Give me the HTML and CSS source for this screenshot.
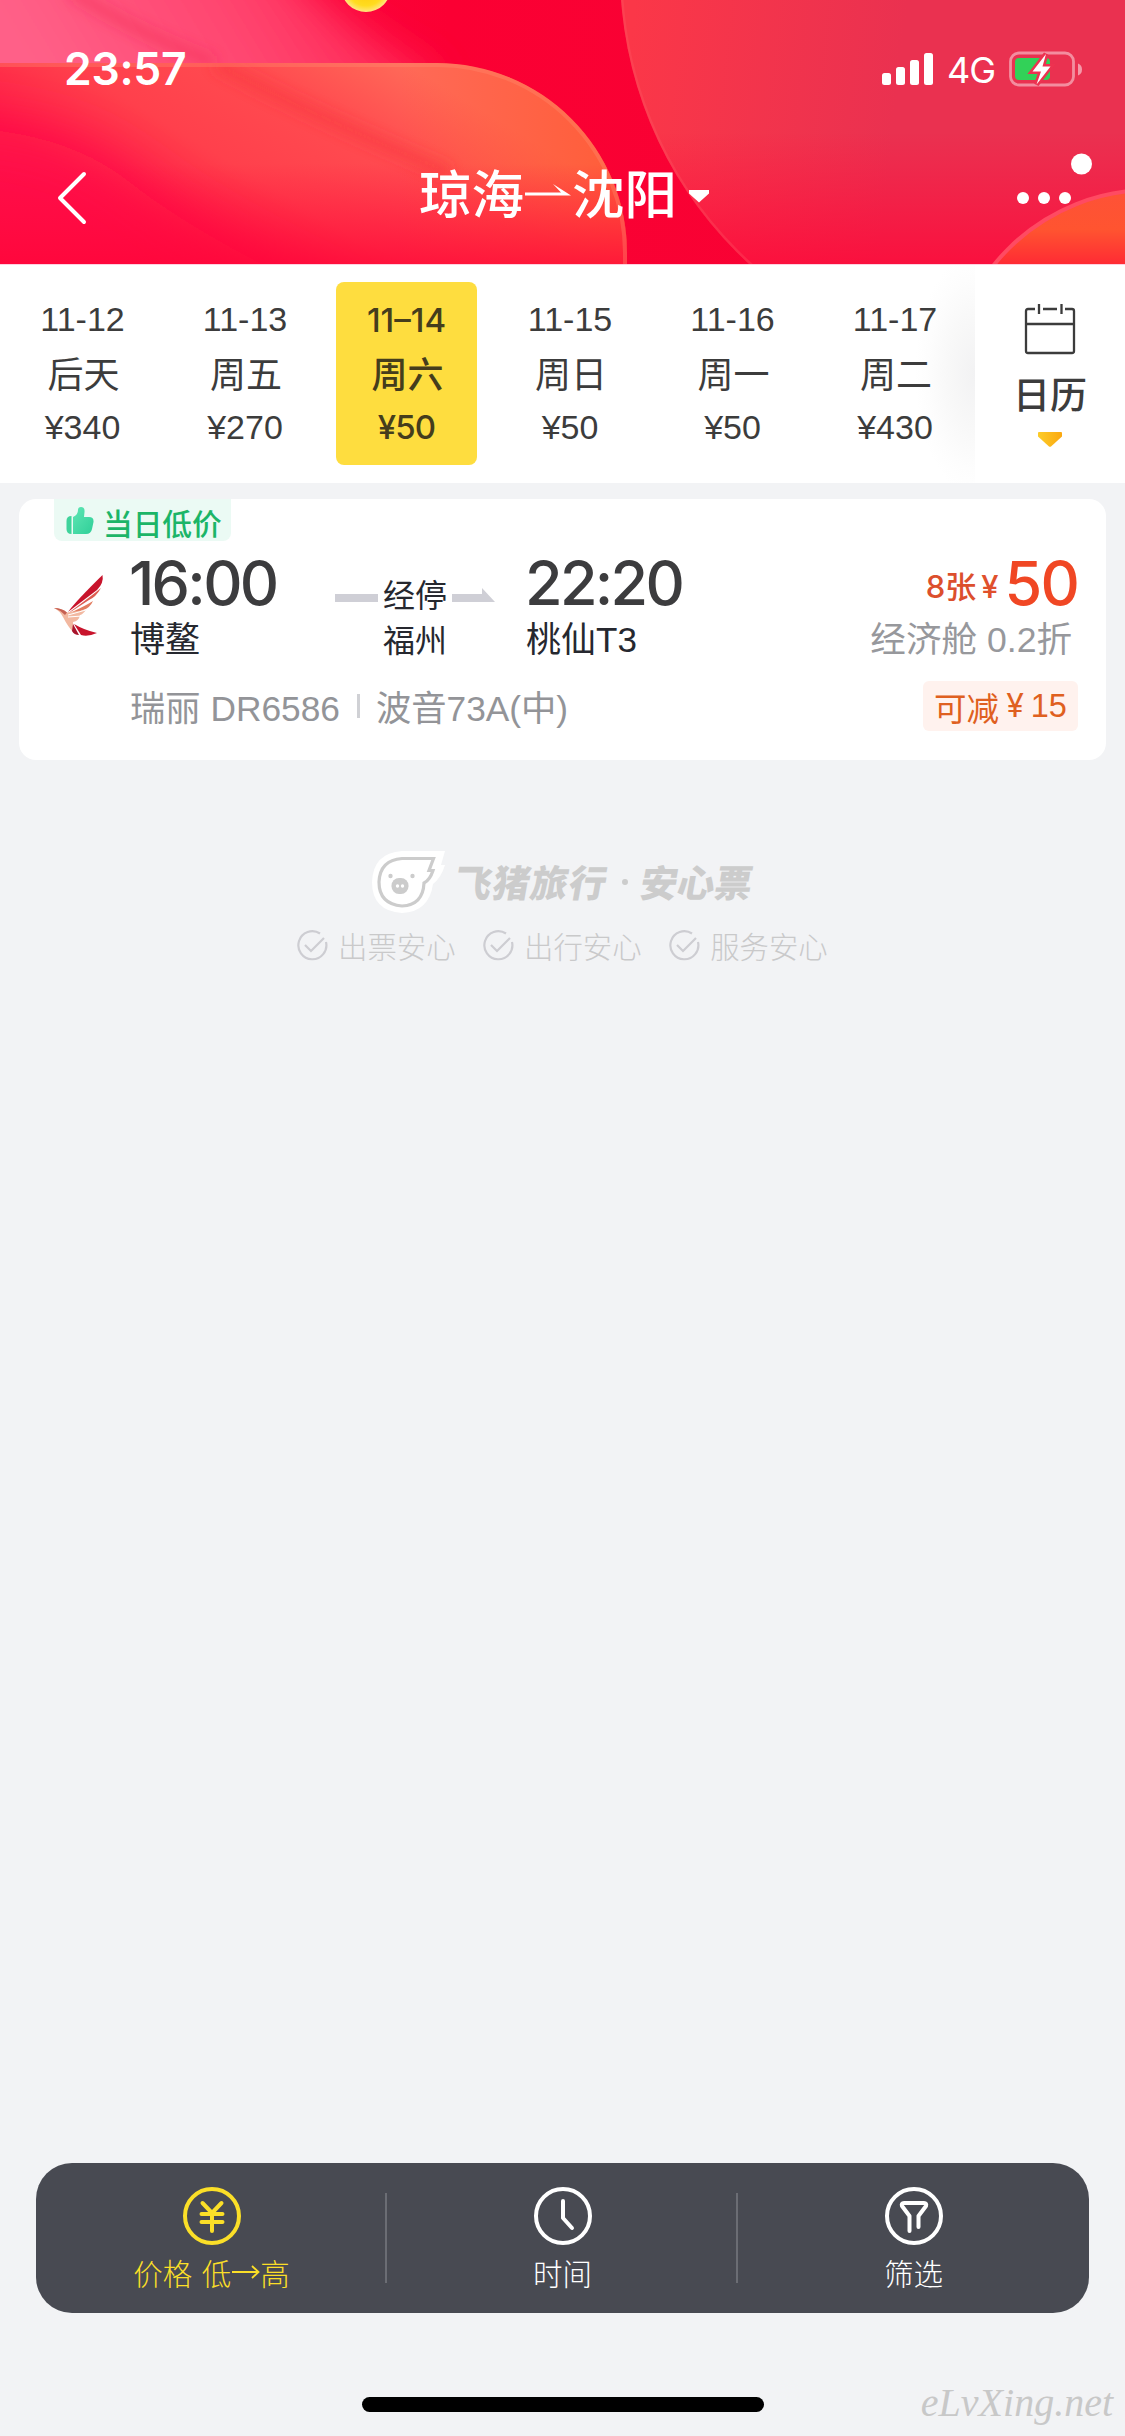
FILE: index.html
```html
<!DOCTYPE html>
<html lang="zh-CN">
<head>
<meta charset="utf-8">
<title>琼海→沈阳</title>
<link rel="stylesheet" href="styles.css">
</head>
<body>
<header class="header">
  <svg class="header-art" viewBox="0 0 1125 264" preserveAspectRatio="none" aria-hidden="true">
    <defs>
      <linearGradient id="base" x1="0" y1="0" x2="1" y2="0"><stop offset="0" stop-color="#ff0a4a"/><stop offset=".4" stop-color="#fb0033"/><stop offset="1" stop-color="#f50434"/></linearGradient>
      <linearGradient id="pink" gradientUnits="userSpaceOnUse" x1="60" y1="90" x2="360" y2="-90"><stop offset="0" stop-color="#ff6088"/><stop offset=".55" stop-color="#ff446e"/><stop offset="1" stop-color="#ff1c4c"/></linearGradient>
      <linearGradient id="slab" gradientUnits="userSpaceOnUse" x1="260" y1="290" x2="400" y2="60"><stop offset="0" stop-color="#ff1a46"/><stop offset=".35" stop-color="#ff404c"/><stop offset=".7" stop-color="#ff4c50"/><stop offset="1" stop-color="#ff6a58"/></linearGradient>
      <linearGradient id="slabr" gradientUnits="userSpaceOnUse" x1="400" y1="140" x2="610" y2="140"><stop offset="0" stop-color="#ff5a30" stop-opacity="0"/><stop offset="1" stop-color="#ff5a30" stop-opacity=".75"/></linearGradient>
      <linearGradient id="low" x1="0" y1="0" x2="0" y2="1"><stop offset=".5" stop-color="#ff0a3c" stop-opacity="0"/><stop offset="1" stop-color="#ff0538" stop-opacity=".75"/></linearGradient>
      <linearGradient id="disc" gradientUnits="userSpaceOnUse" x1="630" y1="40" x2="900" y2="70"><stop offset="0" stop-color="#fb3748"/><stop offset="1" stop-color="#ea3150"/></linearGradient>
      <linearGradient id="sun" gradientUnits="userSpaceOnUse" x1="0" y1="195" x2="0" y2="264"><stop offset="0" stop-color="#fe5236"/><stop offset=".5" stop-color="#ff5430"/><stop offset="1" stop-color="#ff2b34"/></linearGradient>
      <radialGradient id="coin"><stop offset="0" stop-color="#ffc400"/><stop offset=".75" stop-color="#ffdc20"/><stop offset="1" stop-color="#ffe680"/></radialGradient>
      <filter id="b20" x="-30%" y="-60%" width="160%" height="220%"><feGaussianBlur stdDeviation="20"/></filter>
      <filter id="b30" x="-30%" y="-60%" width="160%" height="220%"><feGaussianBlur stdDeviation="28"/></filter>
      <filter id="b5" x="-20%" y="-50%" width="140%" height="200%"><feGaussianBlur stdDeviation="7"/></filter>
      <clipPath id="slabclip"><path d="M0 63H437A190 190 0 0 1 627 253V264H0Z"/></clipPath>
      <clipPath id="discclip"><circle cx="1017" cy="-29" r="397"/></clipPath>
    </defs>
    <rect width="1125" height="264" fill="url(#base)"/>
    <path d="M-80 -80H250Q320 20 440 76L400 130H-80Z" fill="url(#pink)" filter="url(#b20)"/>
    <path d="M70 -10Q130 30 215 63" fill="none" stroke="#f0204c" stroke-opacity=".4" stroke-width="12" filter="url(#b5)"/>
    <g clip-path="url(#slabclip)">
      <rect y="63" width="640" height="201" fill="url(#slab)"/>
      <path d="M-100 128Q50 118 130 182T400 330H-100Z" fill="#ff0848" filter="url(#b30)"/>
      <rect y="63" width="640" height="201" fill="url(#slabr)"/>
      <path d="M215 63Q300 110 450 173" fill="none" stroke="#f83038" stroke-opacity=".5" stroke-width="12" filter="url(#b5)"/>
      <rect y="63" width="640" height="201" fill="url(#low)"/>
      <path d="M0 65H437A188 188 0 0 1 625 253V264" fill="none" stroke="#ff8b70" stroke-opacity=".35" stroke-width="4"/>
    </g>
    <g clip-path="url(#discclip)">
      <rect x="600" width="525" height="264" fill="url(#disc)"/>
      <rect x="600" width="525" height="264" fill="url(#low)"/>
      <circle cx="1017" cy="-29" r="396" fill="none" stroke="#ff5a68" stroke-opacity=".3" stroke-width="3"/>
    </g>
    <circle cx="1150" cy="390" r="200" fill="url(#sun)" stroke="#ff4a62" stroke-width="4"/>
    <circle cx="366" cy="-13" r="25" fill="url(#coin)"/>
  </svg>
  <div class="header-content">
    <div class="status">
      <span class="clock">23:57</span>
      <span class="status-right">
        <svg width="51" height="32" viewBox="0 0 51 32" fill="#fff"><rect y="20" width="9" height="12" rx="2.500"/><rect x="14" y="14" width="9" height="18" rx="2.500"/><rect x="28" y="7" width="9" height="25" rx="2.500"/><rect x="42" width="9" height="32" rx="2.500"/></svg>
        <span class="net">4G</span>
        <svg class="battery" width="74" height="36" viewBox="0 0 74 36">
          <rect x="1.500" y="2" width="63" height="32" rx="8.500" fill="none" stroke="#fff" stroke-opacity=".45" stroke-width="2.800"/>
          <path d="M69 12.500Q73 14 73 18.500T69 24.500Z" fill="#fff" fill-opacity=".5"/>
          <rect x="6" y="7" width="35" height="22" rx="4" fill="#32d158"/>
          <path d="M37 3L23.500 20.500H32L27.500 33.500L41.500 15.500H33.500Z" fill="#fff" stroke="#ed3250" stroke-width="5" paint-order="stroke"/>
        </svg>
      </span>
    </div>
    <div class="nav">
      <svg class="back" width="30" height="54" viewBox="0 0 30 54"><path d="M27 3L3 27L27 51" fill="none" stroke="#fff" stroke-width="4" stroke-linecap="round" stroke-linejoin="round"/></svg>
      <h1 class="title"><span>琼海</span><svg width="46" height="14" viewBox="0 0 46 14"><path d="M0 8.500H36L28 0L46 11.500H0Z" fill="#fff"/></svg><span>沈阳</span><svg class="caret" width="20" height="13" viewBox="0 0 20 13"><path d="M0 0H20V3.500L10 12.500L0 3.500Z" fill="#fff"/></svg></h1>
      <svg class="more" width="78" height="58" viewBox="0 0 78 58" fill="#fff"><circle cx="9" cy="45" r="6"/><circle cx="30" cy="45" r="6"/><circle cx="51" cy="45" r="6"/><circle cx="67.500" cy="11" r="10.500"/></svg>
    </div>
  </div>
</header>

<section class="dates">
  <div class="days">
    <div class="day"><span>11-12</span><b>后天</b><span>¥340</span></div>
    <div class="day"><span>11-13</span><b>周五</b><span>¥270</span></div>
    <div class="day day-on"><span>11–14</span><b>周六</b><span>¥50</span></div>
    <div class="day"><span>11-15</span><b>周日</b><span>¥50</span></div>
    <div class="day"><span>11-16</span><b>周一</b><span>¥50</span></div>
    <div class="day"><span>11-17</span><b>周二</b><span>¥430</span></div>
  </div>
  <div class="calendar">
    <svg width="52" height="54" viewBox="0 0 52 54" fill="none" stroke="#3c3c3c" stroke-width="2.300"><path d="M11 6H4Q2 6 2 8V48Q2 50 4 50H48Q50 50 50 48V8Q50 6 48 6H41M19 6H33M2 21H50M15 1V11M37.500 1V11"/></svg>
    <span>日历</span>
    <svg width="24" height="15" viewBox="0 0 24 15"><defs><linearGradient id="gold"><stop offset="0" stop-color="#fccc28"/><stop offset="1" stop-color="#fba810"/></linearGradient></defs><path d="M1 0H23Q24 0 24 1V4.500L13 14.500Q12 15.200 11 14.500L0 4.500V1Q0 0 1 0Z" fill="url(#gold)"/></svg>
  </div>
</section>

<main class="results">
  <article class="flight">
    <div class="low-tag">
      <svg width="28" height="28" viewBox="0 0 28 28"><defs><linearGradient id="thumb" x1="0" y1="0" x2="1" y2="1"><stop offset="0" stop-color="#5fe6b4"/><stop offset="1" stop-color="#2fcf98"/></linearGradient></defs><path d="M5.500 9V27Q.5 27 .5 22V14Q.5 9 5.500 9Z" fill="#3fd39b"/><path d="M7 10Q12 8 12 3Q12 0 15 0Q19 0 18.500 5L18 10H23Q28 10 27.500 15L26 22Q25 27 20 27H7Z" fill="url(#thumb)"/></svg>
      <span>当日低价</span>
    </div>
    <div class="flight-main">
      <svg class="airline" width="52" height="62" viewBox="0 0 52 62"><path d="M48.500 0Q50 8 43 15L14 37Q21 27 48.500 0Z" fill="#c8142c"/><path d="M17 36Q36 22 47 13Q42 22 35 25L15 38Z" fill="#dd5c50"/><path d="M18 37Q31 31 39 26Q36 33 29 35L16 40Z" fill="#e27d60"/><path d="M0 33Q8 33 13 37.500L32 35Q28 40 26 40Q25 46 19 47L20 58Q14 52 9 42Q6 36 0 33Z" fill="#f2b8a0"/><path d="M0 33Q8 33 13 37.500L11 40Q6 35 0 33Z" fill="#c66052"/><path d="M19 49L25 60Q20 60 18 56Z" fill="#a8142c"/><path d="M20 49Q30 55 43 58Q34 62 27 60Z" fill="#c8142c"/><path d="M14 40L32 35M14 42L28 41" stroke="#fff" stroke-width="1"/></svg>
      <div class="place"><div class="time">16:00</div><div class="port">博鳌</div></div>
      <div class="via">
        <div class="via-line"><i></i><span>经停</span><svg width="43" height="14" viewBox="0 0 43 14"><path d="M0 6H30V0L43 14H0Z" fill="#cfcfd6"/></svg></div>
        <div>福州</div>
      </div>
      <div class="place place-to"><div class="time">22:20</div><div class="port">桃仙T3</div></div>
      <div class="fare">
        <div class="price"><span class="left">8张</span><span class="yen">¥</span><span class="num">50</span></div>
        <div class="cabin">经济舱 0.2折</div>
      </div>
    </div>
    <div class="flight-foot">
      <span>瑞丽 DR6586</span><i class="sep"></i><span>波音73A(中)</span>
      <span class="cut">可减<em>¥</em>15</span>
    </div>
  </article>

  <section class="promise">
    <div class="brand">
      <svg width="75" height="64" viewBox="0 0 75 64"><path d="M31 1H74L70 15H74Q70 28 62 34Q58 62 31 63Q1 61 1 32Q2 3 31 1Z" fill="#fff"/><path d="M31 8.500H62.500L58 20.500H62Q59 30 53 33Q52 55 31 56Q8 54 8 32Q9 10 31 8.500Z" fill="#fff" stroke="#ccc" stroke-width="3.200"/><circle cx="19.500" cy="26" r="2.200" fill="#ccc"/><circle cx="41.500" cy="26" r="2.200" fill="#ccc"/><rect x="20.500" y="28" width="17" height="16" rx="7.500" fill="#ccc"/><circle cx="26.500" cy="36" r="1.700" fill="#fff"/><circle cx="31.500" cy="36" r="1.700" fill="#fff"/></svg>
      <span class="brand-name">飞猪旅行</span><span class="brand-dot"></span><span class="brand-sub">安心票</span>
    </div>
    <div class="checks">
      <span class="check"><svg width="31" height="31" viewBox="0 0 31 31"><path d="M23 3.500A14 14 0 1 0 29 12M8 15L14 21L27 8" fill="none" stroke="#cdcdd2" stroke-width="2.200"/></svg>出票安心</span>
      <span class="check"><svg width="31" height="31" viewBox="0 0 31 31"><path d="M23 3.500A14 14 0 1 0 29 12M8 15L14 21L27 8" fill="none" stroke="#cdcdd2" stroke-width="2.200"/></svg>出行安心</span>
      <span class="check"><svg width="31" height="31" viewBox="0 0 31 31"><path d="M23 3.500A14 14 0 1 0 29 12M8 15L14 21L27 8" fill="none" stroke="#cdcdd2" stroke-width="2.200"/></svg>服务安心</span>
    </div>
  </section>
</main>

<nav class="toolbar">
  <div class="tool tool-on">
    <svg width="60" height="60" viewBox="0 0 60 60" fill="none" stroke="currentColor" stroke-width="4" stroke-linecap="round" stroke-linejoin="round"><circle cx="30" cy="30" r="27"/><path d="M20.500 17L30 27L39.500 17M30 27V45M19.500 28H40.500M19.500 36H40.500"/></svg>
    <span>价格 低<svg class="to" width="29" height="14" viewBox="0 0 29 14" fill="none" stroke="currentColor" stroke-width="1.800"><path d="M1 7H27M21 1L27.500 7L21 13"/></svg>高</span>
  </div>
  <div class="tool">
    <svg width="60" height="60" viewBox="0 0 60 60" fill="none" stroke="currentColor" stroke-width="4" stroke-linecap="round" stroke-linejoin="round"><circle cx="30" cy="30" r="27"/><path d="M30 15V32L39 42"/></svg>
    <span>时间</span>
  </div>
  <div class="tool">
    <svg width="60" height="60" viewBox="0 0 60 60" fill="none" stroke="currentColor" stroke-width="4" stroke-linecap="round" stroke-linejoin="round"><circle cx="30" cy="30" r="27"/><path d="M25.500 45V30L18 20Q17 17 20 17H40Q43 17 42 20L34.500 30V41"/></svg>
    <span>筛选</span>
  </div>
</nav>
<footer class="footer">
  <div class="home"></div>
  <div class="mark">eLvXing.net</div>
</footer>
</body>
</html>
```
FILE: styles.css
```css
* { box-sizing: border-box; }
body {
  margin: 0;
  width: 1125px;
  height: 2436px;
  display: flex;
  flex-direction: column;
  overflow: hidden;
  background: #f2f3f5;
  color: #3c3c3c;
  font-family: "Liberation Sans", "Noto Sans CJK SC", sans-serif;
}
svg { display: block; flex: none; }
i, em, b { font-style: normal; font-weight: inherit; }

/* header */
.header { display: grid; height: 265px; flex: none; border-bottom: 1px solid #ffd0e0; }
.header-art { grid-area: 1 / 1; width: 1125px; height: 264px; }
.header-content { grid-area: 1 / 1; z-index: 1; color: #fff; height: 264px; }
.status { display: flex; justify-content: space-between; padding: 52px 42px 0 64px; height: 138px; }
.clock { font: 600 44.500px/34px Inter, sans-serif; letter-spacing: -.3px; }
.status-right { display: flex; align-items: center; height: 34px; }
.net { font: 400 36px/34px Inter, sans-serif; margin-left: 14px; width: 62px; padding-top: 2px; letter-spacing: -1px; }
.nav { display: grid; grid-template-columns: 362px auto 1fr; padding: 0 33px 0 57px; height: 126px; align-items: start; }
.back { margin-top: 33px; }
.title { display: flex; align-items: center; margin: 19px 0 0; font: 500 52.500px/68px "Noto Sans CJK SC", sans-serif; }
.title svg { margin: -1px 1px 0 1px; }
.title .caret { margin: 11px 0 0 12px; }
.more { justify-self: end; margin-top: 15px; }

/* date strip */
.dates { display: flex; height: 218px; flex: none; background: #fff; }
.days {
  width: 975px;
  display: flex;
  padding: 17px 0 0 11px;
  gap: 21.500px;
  background: radial-gradient(ellipse 60px 120px at 100% 50%, #f2f2f3, #f8f8f8 45%, #fdfdfd 80%, #fff);
}
.day {
  width: 141px;
  height: 183px;
  flex: none;
  display: flex;
  flex-direction: column;
  align-items: center;
  border-radius: 8px;
  padding: 17px 0 0 2px;
  font-size: 34px;
  line-height: 40px;
}
.day b { font: 400 36px/54px "Noto Sans CJK SC", sans-serif; padding-left: 2px; margin: 6px 0 8px; }
.day-on { background: #fedd3f; color: #453d1c; padding: 18px 0 0; }
.day-on span { font: 500 33px/40px Inter, sans-serif; letter-spacing: -.8px; }
.day-on span:first-child { letter-spacing: 0; }
.day-on b { font-weight: 500; margin: 5px 0 8px; }
.calendar { width: 150px; display: flex; flex-direction: column; align-items: center; padding: 38px 0 0; }
.calendar span { font: 500 37px/54px "Noto Sans CJK SC", sans-serif; margin: 9px 0 12px; }

/* flight card */
.results { flex: 1; padding: 16px 19px 0; }
.flight { height: 261px; border-radius: 17px; background: #fff; padding-left: 34px; }
.low-tag { display: flex; align-items: center; width: 177px; height: 42px; padding: 2px 0 0 12px; gap: 9px; background: #ebfaf4; border-radius: 0 0 8px 8px; color: #1cb568; font: 500 29.700px/40px "Noto Sans CJK SC", sans-serif; margin-left: 1px; }
.low-tag span { padding-top: 3px; }
.flight-main { display: flex; height: 137px; }
.airline { margin: 34px 0 0 1px; }
.place { width: 204px; margin-left: 24px; color: #26282f; }
.place-to { margin-left: 31px; }
.time { font: 500 61px/60px Inter, sans-serif; margin: 12px 0 0 -1px; color: #3c3c3e; letter-spacing: -2.700px; white-space: nowrap; }
.port { font: 400 35px/50px "Liberation Sans", "Noto Sans CJK SC", sans-serif; padding-top: 2px; }
.via { width: 160px; margin-left: 1px; font: 400 32px/46px "Noto Sans CJK SC", sans-serif; color: #26282f; text-align: center; padding-top: 30px; }
.via-line { display: flex; align-items: center; justify-content: center; gap: 5px; height: 44px; }
.via-line i { width: 43px; height: 8px; background: #cfcfd6; margin-top: 10px; }
.via-line svg { margin-top: 4px; }
.fare { margin-left: auto; padding-right: 28px; text-align: right; white-space: nowrap; }
.price { display: flex; align-items: flex-start; justify-content: flex-end; margin-top: 12px; height: 60px; color: #f04724; }
.left { font: 500 31px/60px Inter, "Noto Sans CJK SC", sans-serif; color: #dc4f2d; padding-top: 4px; }
.yen { font: 500 31px/60px Inter, sans-serif; margin: 0 6px 0 5px; color: #e0502c; padding-top: 4px; }
.num { font: 500 61px/60px Inter, sans-serif; letter-spacing: -1.800px; }
.cabin { font: 400 35.600px/50px "Liberation Sans", "Noto Sans CJK SC", sans-serif; color: #97989c; padding: 2px 6px 0 0; }
.flight-foot { display: flex; align-items: center; height: 54px; padding: 0 28px 0 77px; color: #939498; font-size: 35.300px; white-space: nowrap; }
.sep { width: 3px; height: 24px; background: #d0d1d5; margin: 2px 16px 0 17px; }
.cut { display: flex; align-items: center; justify-content: center; margin: 2px 0 0 auto; width: 155px; height: 50px; border-radius: 6px; background: #fff2ee; color: #df6020; font-size: 32.500px; }
.cut em { margin: 0 7px; font: 400 32px/50px Inter, sans-serif; }

/* service promise */
.promise { padding-top: 90px; }
.brand { display: flex; align-items: center; padding-left: 352px; height: 64px; color: #ccc; font: 900 37.300px/50px "Noto Sans CJK SC", sans-serif; }
.brand-name, .brand-sub { transform: skewX(-10deg); margin-top: -3px; }
.brand-name { margin-left: 9px; letter-spacing: 1px; }
.brand-dot { width: 6px; height: 6px; border-radius: 3px; background: #ccc; margin: 0 13px 0 14px; }
.checks { display: flex; padding: 9px 0 0 278px; gap: 27.500px; color: #c9c9ca; font: 300 29.400px/44px "Noto Sans CJK SC", sans-serif; }
.check { display: flex; align-items: center; gap: 10px; white-space: nowrap; }

/* sort bar */
.toolbar { display: grid; grid-template-columns: repeat(3, 1fr); margin: 0 36px; height: 150px; flex: none; border-radius: 36px; background: #484a52; color: #fff; }
.tool { display: flex; flex-direction: column; align-items: center; padding-top: 23px; font: 300 29.500px/44px "Noto Sans CJK SC", sans-serif; background: linear-gradient(#6b6d74, #6b6d74) no-repeat right 30px / 2px 90px; }
.tool:last-child { background: none; }
.tool span { margin-top: 4px; display: flex; align-items: center; white-space: pre; word-spacing: 3px; }
.tool-on { color: #fbdf28; }

/* bottom edge */
.footer { display: grid; grid-template-columns: 362px 402px 1fr; height: 123px; flex: none; }
.home { grid-column: 2; height: 15px; margin-top: 84px; border-radius: 8px; background: #000; }
.mark { text-align: right; padding: 65px 12px 0 0; font: italic 400 40px/50px "Liberation Serif", serif; color: #c8c8c8; }
```
